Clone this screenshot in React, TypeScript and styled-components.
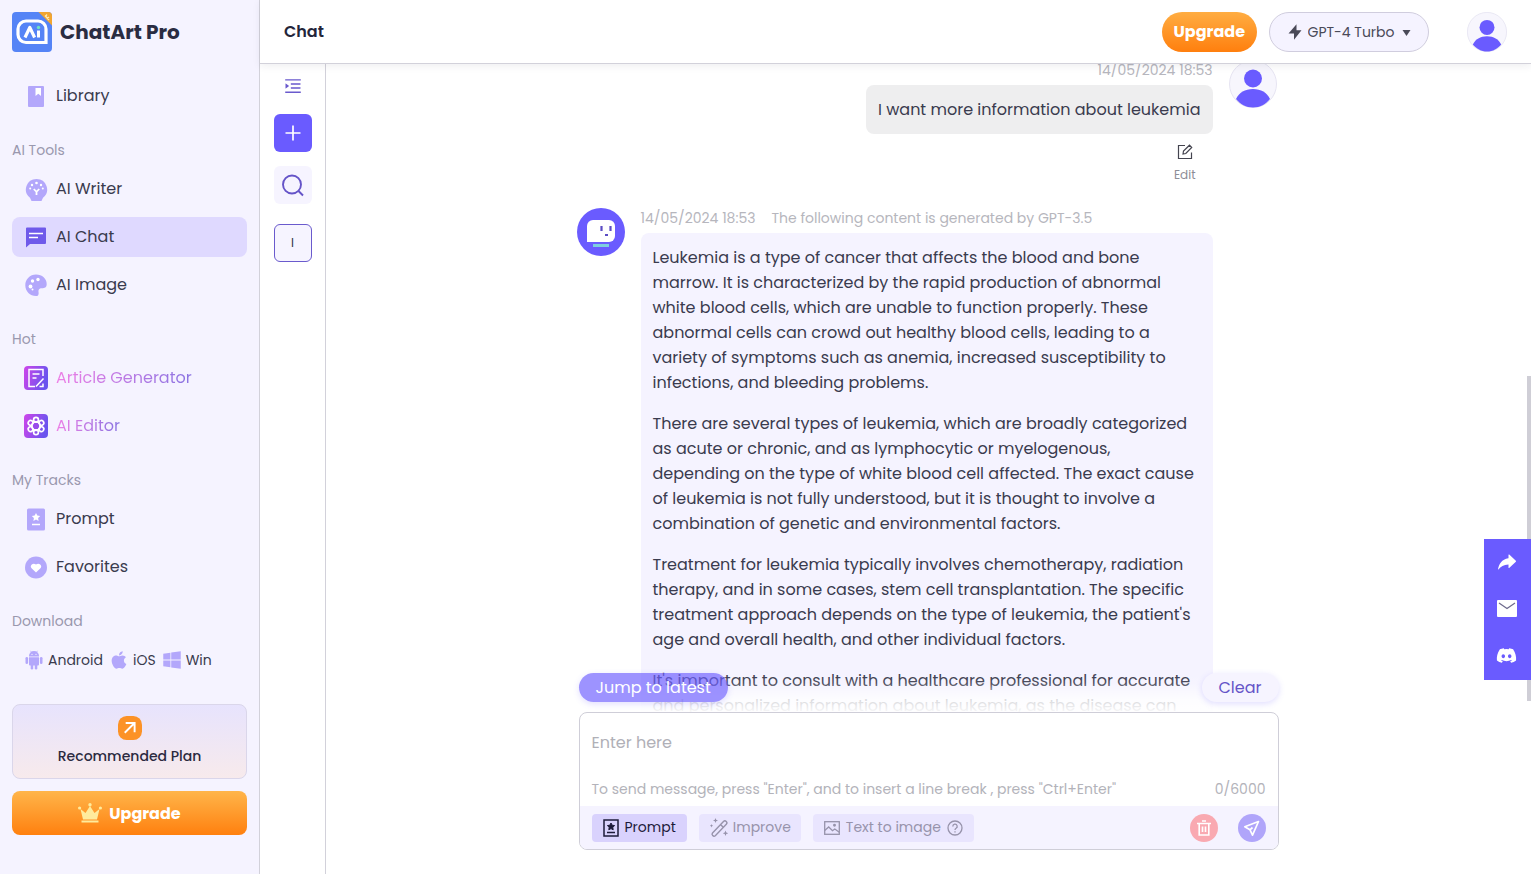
import React from "react";
import styled, { createGlobalStyle } from "styled-components";
import { FaApple, FaWindows, FaDiscord } from "react-icons/fa";
import { IoIosShareAlt } from "react-icons/io";
import { AiOutlineMenuUnfold } from "react-icons/ai";

const GlobalStyle = createGlobalStyle`
  *, *::before, *::after { box-sizing: border-box; }
  body {
    margin: 0;
    background: #fff;
    color: #3a3b4e;
    font-family: Poppins, Inter, "Open Sans", sans-serif;
    font-size: 16px;
    font-weight: 400;
  }
  button, select, textarea { font: inherit; color: inherit; }
  button { border: 0; background: none; padding: 0; cursor: pointer; }
  a { color: inherit; text-decoration: none; }
  svg { display: block; flex: none; }
  p { margin: 0; }
`;

const Shell = styled.div`
  display: grid;
  grid-template-columns: 260px minmax(0, 1fr);
  height: 100vh;
  min-height: 860px;
  overflow: hidden;
`;

/* Sidebar */

const Sidebar = styled.aside`
  display: flex;
  flex-direction: column;
  padding: 12px;
  background: #f5f3ff;
  border-right: 1px solid #d2d1da;
`;

const Brand = styled.a`
  display: flex;
  align-items: center;
  gap: 8px;
  height: 40px;
  margin-bottom: 24px;
  font-size: 20px;
  font-weight: 700;
  color: #2a2c42;
`;

const NavGroup = styled.nav`
  display: flex;
  flex-direction: column;
  gap: 8px;
  margin-bottom: 24px;
`;

const GroupTitle = styled.h2`
  margin: 0;
  font-size: 14px;
  line-height: 21px;
  font-weight: 400;
  color: #9a98ae;
`;

const NavItem = styled.a<{ $active?: boolean }>`
  display: flex;
  align-items: center;
  gap: 8px;
  height: 40px;
  padding: 0 12px;
  border-radius: 8px;
  background: ${(p) => (p.$active ? "#dfd9ff" : "transparent")};
`;

const NavText = styled.span<{ $hot?: boolean }>`
  line-height: 24px;
  ${(p) =>
    p.$hot &&
    `
    background: linear-gradient(90deg, #ee7fe6, #8a74e2);
    background-clip: text;
    -webkit-background-clip: text;
    color: transparent;
  `}
`;

const Downloads = styled.div`
  display: flex;
  align-items: center;
  gap: 6px;
  height: 40px;
  padding-left: 12px;
  font-size: 14px;
`;

const DownloadLink = styled.a`
  display: flex;
  align-items: center;
  gap: 4px;

  svg { color: #b3a7fb; }
`;

const PlanCard = styled.button`
  display: flex;
  flex-direction: column;
  align-items: center;
  gap: 6px;
  padding: 11px 12px;
  border: 1px solid #dad6ea;
  border-radius: 8px;
  background: linear-gradient(180deg, #e7e3fd, #f7eaec);
  font-size: 14px;
  line-height: 21px;
  font-weight: 500;
  color: #2b2a40;
`;

const UpgradeWide = styled.button`
  display: flex;
  align-items: center;
  justify-content: center;
  gap: 7px;
  height: 44px;
  margin-top: 12px;
  border-radius: 8px;
  background: linear-gradient(180deg, #ffb54a, #ff800f);
  font-weight: 700;
  color: #fff;
`;

/* Main column */

const Main = styled.div`
  display: grid;
  grid-template-rows: 64px minmax(0, 1fr);
  min-width: 0;
  min-height: 0;
`;

const Header = styled.header`
  position: relative;
  z-index: 2;
  display: flex;
  align-items: center;
  padding: 0 24px;
  background: #fff;
  border-bottom: 1px solid #d2d1da;
  box-shadow: 0 2px 8px rgba(40, 40, 60, 0.08);
`;

const PageTitle = styled.h1`
  margin: 0 auto 0 0;
  font-size: 16px;
  line-height: 24px;
  font-weight: 600;
  color: #23253a;
`;

const UpgradePill = styled.button`
  height: 40px;
  padding: 0 12px;
  border-radius: 20px;
  background: linear-gradient(180deg, #ffad42, #ff7f0e);
  font-weight: 700;
  color: #fff;
`;

const ModelPicker = styled.label`
  display: flex;
  align-items: center;
  justify-content: center;
  gap: 6px;
  width: 160px;
  height: 40px;
  margin: 0 38px 0 12px;
  border: 1px solid #d0cdde;
  border-radius: 20px;
  background: #f5f3ff;
  font-size: 14px;
  color: #4a4a58;
`;

const ModelSelect = styled.select`
  appearance: none;
  padding: 0;
  border: 0;
  background: transparent;
  outline: none;
`;

const Workspace = styled.div`
  display: grid;
  grid-template-columns: 66px minmax(0, 1fr);
  min-height: 0;
`;

const Rail = styled.aside`
  display: flex;
  flex-direction: column;
  align-items: center;
  padding-top: 12px;
  border-right: 1px solid #d2d1da;
`;

const RailToggle = styled.button`
  margin-bottom: 18px;
  color: #6a5acd;
`;

const RailButton = styled.button<{ $kind: "new" | "search" | "chat" }>`
  display: grid;
  place-items: center;
  width: 38px;
  height: 38px;
  margin-bottom: ${(p) => (p.$kind === "search" ? "20px" : "14px")};
  border-radius: 6px;
  border: ${(p) => (p.$kind === "chat" ? "1px solid #6a5acd" : "0")};
  background: ${(p) => (p.$kind === "new" ? "#6a5bff" : "#f6f4ff")};
  color: ${(p) => (p.$kind === "new" ? "#fff" : p.$kind === "search" ? "#6554c8" : "#2f3144")};
  font-size: 12px;
`;

const ChatArea = styled.main`
  position: relative;
  min-width: 0;
  min-height: 0;
  overflow: hidden;
`;

const ThreadScroll = styled.div`
  height: 100%;
  padding-right: 4px;
  overflow: hidden;
`;

const Thread = styled.div`
  display: flex;
  flex-direction: column;
  width: 700px;
  max-width: 100%;
  margin: -4px auto 0;
`;

const Message = styled.article<{ $mine?: boolean }>`
  display: flex;
  flex-direction: ${(p) => (p.$mine ? "row-reverse" : "row")};
  gap: 16px;
  padding-right: ${(p) => (p.$mine ? "0" : "64px")};
`;

const MessageBody = styled.div<{ $mine?: boolean }>`
  display: flex;
  flex: 1;
  flex-direction: column;
  align-items: ${(p) => (p.$mine ? "flex-end" : "stretch")};
  min-width: 0;
`;

const Meta = styled.div`
  display: flex;
  gap: 16px;
  margin-bottom: 5px;
  font-size: 14px;
  line-height: 20px;
  color: #b6b6bd;
`;

const Bubble = styled.div<{ $mine?: boolean }>`
  display: flex;
  flex-direction: column;
  gap: 16px;
  padding: 12px;
  border-radius: 8px;
  background: ${(p) => (p.$mine ? "#eeeeef" : "#f5f3ff")};
  line-height: 25px;
  white-space: nowrap;
`;

const EditButton = styled.button`
  display: flex;
  flex-direction: column;
  align-items: center;
  gap: 6px;
  margin: 10px 17px 24px 0;
  font-size: 12px;
  line-height: 18px;
  color: #8d8d96;

  svg { color: #44444f; }
`;

const Dock = styled.div`
  position: absolute;
  right: 0;
  bottom: 0;
  left: 0;
  padding-bottom: 24px;
  background: linear-gradient(
    180deg,
    rgba(255, 255, 255, 0) 0,
    rgba(255, 255, 255, 0.1) 10px,
    rgba(255, 255, 255, 0.8) 26px,
    rgba(255, 255, 255, 0.92) 36px,
    #fff 42px
  );
`;

const DockInner = styled.div`
  width: 700px;
  max-width: 100%;
  margin: 0 auto;
`;

const PillRow = styled.div`
  display: flex;
  justify-content: space-between;
  margin-bottom: 10px;
`;

const FloatingPill = styled.button<{ $solid?: boolean }>`
  height: 29px;
  padding: 0 17px;
  border-radius: 15px;
  background: ${(p) => (p.$solid ? "rgba(106, 91, 255, 0.66)" : "#f6f4ff")};
  color: ${(p) => (p.$solid ? "#fff" : "#6554c8")};
  box-shadow: 0 2px 6px rgba(106, 91, 255, 0.2);
`;

const Composer = styled.form`
  border: 1px solid #cfced8;
  border-radius: 8px;
  background: #fff;
  overflow: hidden;
`;

const Prompt = styled.textarea`
  display: block;
  width: 100%;
  height: 64px;
  padding: 17px 12px 0;
  border: 0;
  outline: 0;
  resize: none;
  background: transparent;
  line-height: 25px;

  &::placeholder { color: #b0b0b7; }
`;

const HintRow = styled.div`
  display: flex;
  justify-content: space-between;
  padding: 2px 12px 7px;
  font-size: 14px;
  line-height: 20px;
  color: #b3b3ba;
`;

const Toolbar = styled.div`
  display: flex;
  align-items: center;
  gap: 12px;
  height: 43px;
  padding: 0 12px;
  background: #f5f3ff;
`;

const ToolButton = styled.button<{ $on?: boolean; $compact?: boolean }>`
  display: flex;
  align-items: center;
  gap: ${(p) => (p.$compact ? "4px" : "6px")};
  height: 28px;
  padding: ${(p) => (p.$compact ? "0 10px" : "0 11px")};
  border-radius: 4px;
  background: ${(p) => (p.$on ? "#d9d2fd" : "#e9e5fe")};
  color: ${(p) => (p.$on ? "#1d1b3a" : "#9793ab")};
  font-size: 14px;
`;

const RoundActions = styled.div`
  display: flex;
  gap: 20px;
  margin-left: auto;
`;

const RoundButton = styled.button<{ $danger?: boolean }>`
  display: grid;
  place-items: center;
  width: 28px;
  height: 28px;
  border-radius: 50%;
  background: ${(p) => (p.$danger ? "#f9a9b1" : "#b0a5fa")};
  color: #fff;
`;

const ScrollThumb = styled.div`
  position: absolute;
  top: 312px;
  right: 0;
  z-index: 1;
  width: 4px;
  height: 325px;
  background: #cfced6;
`;

const ShareBar = styled.div`
  position: fixed;
  right: 0;
  bottom: 194px;
  z-index: 3;
  display: flex;
  flex-direction: column;
  width: 47px;
  background: #6a5bff;
`;

const ShareLink = styled.a`
  display: grid;
  place-items: center;
  height: 47px;
  padding: 0 2px 2px 0;
  color: #fff;
`;

/* Icons */

const Logo = () => (
  <svg width="40" height="40" viewBox="0 0 40 40">
    <rect width="40" height="40" rx="4" fill="#5584f6" />
    <path d="M14 9h12a8 8 0 0 1 8 8v13.500H14a8 8 0 0 1-8-8V17a8 8 0 0 1 8-8z" fill="#5584f6" stroke="#fff" strokeWidth="3.200" />
    <path d="M13 25.500l4.800-10 4.800 10" fill="none" stroke="#fff" strokeWidth="3.200" strokeLinejoin="round" />
    <path d="M26.500 18.500v7" stroke="#fff" strokeWidth="3" />
    <circle cx="26.500" cy="15.500" r="1.700" fill="#6fe3c0" />
    <path d="M26.500 0H36a4 4 0 0 1 4 4v9.500z" fill="#f2a530" />
    <path d="M33 3.500l4 4.500M35 2.500l-1.500 2M37 5l-2 1.500" fill="none" stroke="#ffe9b0" strokeWidth="1.400" />
  </svg>
);

const LibraryIcon = () => (
  <svg width="24" height="24" viewBox="0 0 24 24">
    <rect x="4" y="2" width="16" height="21" rx="1" fill="#b3a7fb" />
    <path d="M11.500 4h5.500v8l-2.700-2.200L11.500 12z" fill="#fff" />
  </svg>
);

const WriterIcon = () => (
  <svg width="24" height="24" viewBox="0 0 24 24">
    <path d="M12.500 2A10.500 10.500 0 0 1 19 20.800L17.500 24h-10L6 20.800A10.500 10.500 0 0 1 12.500 2z" fill="#b3a7fb" />
    <g fill="#fff">
      <circle cx="12.500" cy="6" r="1.300" />
      <circle cx="8" cy="8" r="1.200" />
      <circle cx="17" cy="8" r="1.200" />
      <circle cx="6.200" cy="11.500" r="1" />
      <circle cx="18.800" cy="11.500" r="1" />
    </g>
    <path d="M9.800 12l2.700 2.800 2.700-2.800M12.500 14.500v3.500" fill="none" stroke="#fff" strokeWidth="1.800" />
  </svg>
);

const ChatIcon = () => (
  <svg width="24" height="24" viewBox="0 0 24 24">
    <path d="M3 2.500h18a1 1 0 0 1 1 1V18a1 1 0 0 1-1 1H6l-4 3.500v-19a1 1 0 0 1 1-1z" fill="#6f5aea" />
    <path d="M5 8.500h14M5 12.500h9" stroke="#fff" strokeWidth="1.600" />
  </svg>
);

const ImageIcon = () => (
  <svg width="24" height="24" viewBox="0 0 24 24">
    <path d="M12 1.500c6.200 0 10.700 4.200 10.700 9.500 0 3.600-2.200 4.200-4.700 4.200-3.200 0-3.800 1.800-3.400 4.200.3 2.400-.6 3.600-2.600 3.600C6 23 1.300 18.300 1.300 12.200 1.300 6.300 6 1.500 12 1.500z" fill="#b3a7fb" />
    <g fill="#fff">
      <circle cx="6.500" cy="13.500" r="1.900" />
      <circle cx="8.500" cy="8" r="1.700" />
      <circle cx="14" cy="6.500" r="1.700" />
      <circle cx="8.500" cy="16.500" r="1" />
    </g>
  </svg>
);

const HotTile = ({ id, children }: { id: string; children: React.ReactNode }) => (
  <svg width="24" height="24" viewBox="0 0 24 24" fill="none" stroke="#fff" strokeWidth="1.500">
    <defs>
      <linearGradient id={id} x1="0" y1="0" x2="1" y2="0.300">
        <stop offset="0" stopColor="#cf45ea" />
        <stop offset="1" stopColor="#6a54ee" />
      </linearGradient>
    </defs>
    <rect width="24" height="24" rx="4" fill={`url(#${id})`} stroke="none" />
    {children}
  </svg>
);

const ArticleIcon = () => (
  <HotTile id="hotArticle">
    <path d="M19 10V3.500H5V20.500h6M8.500 8h7M8.500 12h4M19.500 12.500L12 20.500M15.500 20.500H19v-3" />
  </HotTile>
);

const EditorIcon = () => (
  <HotTile id="hotEditor">
    {[0, 60, 120, 180, 240, 300].map((a) => (
      <circle key={a} cx="12" cy="5.800" r="2.400" strokeWidth="1.700" transform={`rotate(${a} 12 12)`} />
    ))}
    <circle cx="12" cy="12" r="4.200" strokeWidth="2" />
    <circle cx="12" cy="12" r="2.800" fill="#9a4eea" stroke="none" />
  </HotTile>
);

const PromptIcon = () => (
  <svg width="24" height="24" viewBox="0 0 24 24">
    <rect x="3" y="1.500" width="18" height="22" rx="1.500" fill="#b3a7fb" />
    <path d="M12 6l1.300 2.600 2.900.4-2.100 2 .5 2.900-2.600-1.400-2.600 1.400.5-2.900-2.100-2 2.900-.4z" fill="#fff" />
    <path d="M8 17.500h8" stroke="#fff" strokeWidth="1.500" />
  </svg>
);

const HeartIcon = () => (
  <svg width="24" height="24" viewBox="0 0 24 24">
    <circle cx="12" cy="12.500" r="11" fill="#b3a7fb" />
    <path d="M12 17.500l-4.200-4a2.800 2.800 0 0 1 0-4c1.200-1.200 3-1 4.200 0 1.200-1 3-1.200 4.200 0a2.800 2.800 0 0 1 0 4z" fill="#fff" />
  </svg>
);

const AndroidIcon = () => (
  <svg width="20" height="20" viewBox="0 0 20 20" fill="currentColor">
    <path d="M5 6a5 5 0 0 1 10 0v.5H5z" />
    <path d="M6.500 .8l1.200 1.700M13.500 .8l-1.200 1.700" stroke="currentColor" strokeWidth=".8" />
    <path d="M5 7.200h10v7.300a1 1 0 0 1-1 1H6a1 1 0 0 1-1-1z" />
    <rect x="1.500" y="7" width="2.600" height="7" rx="1.300" />
    <rect x="15.900" y="7" width="2.600" height="7" rx="1.300" />
    <rect x="6.700" y="13" width="2.500" height="6.500" rx="1.200" />
    <rect x="10.800" y="13" width="2.500" height="6.500" rx="1.200" />
    <circle cx="8" cy="4.300" r=".6" fill="#fff" />
    <circle cx="12" cy="4.300" r=".6" fill="#fff" />
  </svg>
);

const PlanIcon = () => (
  <svg width="24" height="24" viewBox="0 0 25 25">
    <rect width="25" height="25" rx="9" fill="#fc9226" />
    <path d="M7 17.500L17 7.500M8 7.300h9.300v9.500" fill="none" stroke="#fff" strokeWidth="2" />
  </svg>
);

const CrownIcon = () => (
  <svg width="24" height="20" viewBox="0 0 24 20">
    <g fill="#ffeb9c">
      <path d="M2.500 6l5 4L12 3l4.500 7 5-4-2.500 10.500H5z" />
      <circle cx="1.600" cy="5" r="1.600" />
      <circle cx="12" cy="1.700" r="1.700" />
      <circle cx="22.400" cy="5" r="1.600" />
      <rect x="3.500" y="17.500" width="17" height="2" />
    </g>
  </svg>
);

const UserAvatar = ({ size }: { size: number }) => (
  <svg width={size} height={size} viewBox="0 0 48 48" role="img" aria-label="User">
    <circle cx="24" cy="24" r="23.500" fill="#f7f6fd" stroke="#e6e4f2" />
    <circle cx="24" cy="18.500" r="9" fill="#6a5bff" />
    <path d="M7 39c3-6.500 9-10 17-10s14 3.500 17 10c-4 5-10 8.500-17 8.500S11 44 7 39z" fill="#6a5bff" />
  </svg>
);

const BotAvatar = () => (
  <svg width="48" height="48" viewBox="0 0 48 48" role="img" aria-label="Assistant">
    <circle cx="24" cy="24" r="24" fill="#6a5bff" />
    <path d="M16 12h16a6 6 0 0 1 6 6v10a6 6 0 0 1-6 6H10V18a6 6 0 0 1 6-6z" fill="#fff" />
    <path d="M24.500 18v5M33.500 18v5M28 27h3" stroke="#5b4cc4" strokeWidth="2.200" />
    <rect x="16" y="36" width="16" height="3" fill="#7fd0dd" />
  </svg>
);

const BoltIcon = () => (
  <svg width="14" height="16" viewBox="0 0 14 16" fill="currentColor">
    <path d="M8.500 .3V6.300h5L6 15.700V9.500H.5z" />
  </svg>
);

const CaretIcon = () => (
  <svg width="9" height="8" viewBox="0 0 9 8" fill="currentColor">
    <path d="M.5 2h8l-4 6z" />
  </svg>
);

const PlusIcon = () => (
  <svg width="16" height="16" viewBox="0 0 16 16" stroke="#fff" strokeWidth="1.700">
    <path d="M8 .5v15M.5 8h15" />
  </svg>
);

const SearchIcon = () => (
  <svg width="24" height="24" viewBox="0 0 24 24" fill="none" stroke="currentColor" strokeWidth="1.900">
    <circle cx="11" cy="11.500" r="9" />
    <path d="M17.500 18l4.500 4.500" />
  </svg>
);

const EditIcon = () => (
  <svg width="16" height="16" viewBox="0 0 16 16" fill="none" stroke="currentColor" strokeWidth="1.200">
    <path d="M8 1.500H1.500v13h13V8.500M6 10l.5-3L12.500 1.200l2.200 2.200L8.800 9.500z" />
  </svg>
);

const PromptSmallIcon = () => (
  <svg width="16" height="18" viewBox="0 0 16 18">
    <rect x="1" y="1" width="14" height="16" fill="none" stroke="currentColor" strokeWidth="1.500" />
    <path d="M8 4l1.100 2.200 2.500.4-1.800 1.700.4 2.500L8 9.600l-2.200 1.200.4-2.500-1.800-1.700 2.500-.4z" fill="currentColor" stroke="currentColor" strokeWidth="1" />
    <path d="M4 13.500h8" stroke="currentColor" strokeWidth="1.500" />
  </svg>
);

const WandIcon = () => (
  <svg width="20" height="20" viewBox="0 0 20 20" fill="none" stroke="currentColor" strokeWidth="1.400">
    <path d="M3.500 15L14.500 3.500a1.900 1.900 0 0 1 2.800 2.700L6.300 17.800A2 2 0 0 1 3.500 15zM11.500 6.500L14 9" />
    <path d="M6.500 0l.7 1.800 1.800.7-1.800.7-.7 1.800-.7-1.800L4 2.500l1.800-.7zM2.500 6l.5 1.300 1.300.5-1.300.5-.5 1.300L2 8.300.7 7.800 2 7.300zM16.500 12.500l.8 2 2 .8-2 .8-.8 2-.8-2-2-.8 2-.8z" fill="currentColor" stroke="none" />
  </svg>
);

const PictureIcon = () => (
  <svg width="16" height="14" viewBox="0 0 16 14" fill="none" stroke="currentColor" strokeWidth="1.300">
    <rect x=".7" y=".7" width="14.600" height="12.600" />
    <path d="M.7 9.500l4-3.500 3.800 3.700 2.300-1.700 4.500 3.200" />
    <circle cx="10.500" cy="4.200" r=".8" fill="currentColor" />
  </svg>
);

const HelpIcon = () => (
  <svg width="16" height="16" viewBox="0 0 16 16" fill="none" stroke="currentColor" strokeWidth="1.300">
    <circle cx="8" cy="8" r="7" />
    <path d="M5.800 6.400a2.200 2.200 0 1 1 3.300 1.900C8.300 8.800 8 9.100 8 10M8 11.200v1.300" />
  </svg>
);

const TrashIcon = () => (
  <svg width="16" height="18" viewBox="0 0 16 18" fill="none" stroke="currentColor" strokeWidth="1.600">
    <path d="M1 4.500h14M6 2h4M3.200 4.500V16h9.600V4.500M6.500 7.500v5.500M9.500 7.500v5.500" />
  </svg>
);

const SendIcon = () => (
  <svg width="18" height="18" viewBox="0 0 18 18" fill="none" stroke="currentColor" strokeWidth="1.700" strokeLinejoin="round">
    <path d="M15.500 2.500L1.800 7.800l5.200 3 2.500 5.400z" />
    <path d="M7 10.800l2.500-2.300" />
  </svg>
);

const MailIcon = () => (
  <svg width="20" height="17" viewBox="0 0 20 17">
    <rect width="20" height="17" rx="1" fill="#fff" />
    <path d="M2 3l8 5.500L18 3" fill="none" stroke="#6d6a8c" strokeWidth="1.200" />
  </svg>
);

/* Content */

const answer = [
  [
    "Leukemia is a type of cancer that affects the blood and bone",
    "marrow. It is characterized by the rapid production of abnormal",
    "white blood cells, which are unable to function properly. These",
    "abnormal cells can crowd out healthy blood cells, leading to a",
    "variety of symptoms such as anemia, increased susceptibility to",
    "infections, and bleeding problems.",
  ],
  [
    "There are several types of leukemia, which are broadly categorized",
    "as acute or chronic, and as lymphocytic or myelogenous,",
    "depending on the type of white blood cell affected. The exact cause",
    "of leukemia is not fully understood, but it is thought to involve a",
    "combination of genetic and environmental factors.",
  ],
  [
    "Treatment for leukemia typically involves chemotherapy, radiation",
    "therapy, and in some cases, stem cell transplantation. The specific",
    "treatment approach depends on the type of leukemia, the patient's",
    "age and overall health, and other individual factors.",
  ],
  [
    "It's important to consult with a healthcare professional for accurate",
    "and personalized information about leukemia, as the disease can",
  ],
];

interface Entry {
  label: string;
  icon: React.ReactNode;
  active?: boolean;
  hot?: boolean;
}

const groups: { title?: string; items: Entry[] }[] = [
  { items: [{ label: "Library", icon: <LibraryIcon /> }] },
  {
    title: "AI Tools",
    items: [
      { label: "AI Writer", icon: <WriterIcon /> },
      { label: "AI Chat", icon: <ChatIcon />, active: true },
      { label: "AI Image", icon: <ImageIcon /> },
    ],
  },
  {
    title: "Hot",
    items: [
      { label: "Article Generator", icon: <ArticleIcon />, hot: true },
      { label: "AI Editor", icon: <EditorIcon />, hot: true },
    ],
  },
  {
    title: "My Tracks",
    items: [
      { label: "Prompt", icon: <PromptIcon /> },
      { label: "Favorites", icon: <HeartIcon /> },
    ],
  },
];

export default function App() {
  return (
    <>
      <GlobalStyle />
      <Shell>
        <Sidebar>
          <Brand href="#home">
            <Logo />
            ChatArt Pro
          </Brand>
          {groups.map((group, i) => (
            <NavGroup key={i} aria-label={group.title ?? "Main"}>
              {group.title && <GroupTitle>{group.title}</GroupTitle>}
              {group.items.map((item) => (
                <NavItem key={item.label} href="#nav" $active={item.active}>
                  {item.icon}
                  <NavText $hot={item.hot}>{item.label}</NavText>
                </NavItem>
              ))}
            </NavGroup>
          ))}
          <NavGroup aria-label="Download">
            <GroupTitle>Download</GroupTitle>
            <Downloads>
              <DownloadLink href="#android"><AndroidIcon />Android</DownloadLink>
              <DownloadLink href="#ios"><FaApple size={20} />iOS</DownloadLink>
              <DownloadLink href="#win"><FaWindows size={20} />Win</DownloadLink>
            </Downloads>
          </NavGroup>
          <PlanCard type="button">
            <PlanIcon />
            Recommended Plan
          </PlanCard>
          <UpgradeWide type="button">
            <CrownIcon />
            Upgrade
          </UpgradeWide>
        </Sidebar>

        <Main>
          <Header>
            <PageTitle>Chat</PageTitle>
            <UpgradePill type="button">Upgrade</UpgradePill>
            <ModelPicker>
              <BoltIcon />
              <ModelSelect aria-label="Model" defaultValue="gpt4">
                <option value="gpt4">GPT-4 Turbo</option>
              </ModelSelect>
              <CaretIcon />
            </ModelPicker>
            <UserAvatar size={40} />
          </Header>

          <Workspace>
            <Rail>
              <RailToggle type="button" aria-label="Expand history">
                <AiOutlineMenuUnfold size={20} />
              </RailToggle>
              <RailButton type="button" $kind="new" aria-label="New chat"><PlusIcon /></RailButton>
              <RailButton type="button" $kind="search" aria-label="Search"><SearchIcon /></RailButton>
              <RailButton type="button" $kind="chat">I</RailButton>
            </Rail>

            <ChatArea>
              <ThreadScroll>
                <Thread>
                  <Message $mine>
                    <UserAvatar size={48} />
                    <MessageBody $mine>
                      <Meta>14/05/2024 18:53</Meta>
                      <Bubble $mine><p>I want more information about leukemia</p></Bubble>
                      <EditButton type="button">
                        <EditIcon />
                        Edit
                      </EditButton>
                    </MessageBody>
                  </Message>
                  <Message>
                    <BotAvatar />
                    <MessageBody>
                      <Meta>
                        <span>14/05/2024 18:53</span>
                        <span>The following content is generated by GPT-3.5</span>
                      </Meta>
                      <Bubble>
                        {answer.map((lines) => (
                          <p key={lines[0]}>
                            {lines.map((line) => (
                              <React.Fragment key={line}>
                                {line}
                                <br />
                              </React.Fragment>
                            ))}
                          </p>
                        ))}
                      </Bubble>
                    </MessageBody>
                  </Message>
                </Thread>
              </ThreadScroll>

              <Dock>
                <DockInner>
                  <PillRow>
                    <FloatingPill type="button" $solid>Jump to latest</FloatingPill>
                    <FloatingPill type="button">Clear</FloatingPill>
                  </PillRow>
                  <Composer>
                    <Prompt aria-label="Message" placeholder="Enter here" />
                    <HintRow>
                      <span>To send message, press "Enter", and to insert a line break , press "Ctrl+Enter"</span>
                      <span>0/6000</span>
                    </HintRow>
                    <Toolbar>
                      <ToolButton type="button" $on><PromptSmallIcon />Prompt</ToolButton>
                      <ToolButton type="button" $compact><WandIcon />Improve</ToolButton>
                      <ToolButton type="button"><PictureIcon />Text to image<HelpIcon /></ToolButton>
                      <RoundActions>
                        <RoundButton type="button" $danger aria-label="Delete"><TrashIcon /></RoundButton>
                        <RoundButton type="button" aria-label="Send"><SendIcon /></RoundButton>
                      </RoundActions>
                    </Toolbar>
                  </Composer>
                </DockInner>
              </Dock>
              <ScrollThumb />
            </ChatArea>
          </Workspace>
        </Main>
      </Shell>
      <ShareBar>
        <ShareLink href="#share" aria-label="Share"><IoIosShareAlt size={24} /></ShareLink>
        <ShareLink href="#mail" aria-label="Mail"><MailIcon /></ShareLink>
        <ShareLink href="#discord" aria-label="Discord"><FaDiscord size={21} /></ShareLink>
      </ShareBar>
    </>
  );
}
